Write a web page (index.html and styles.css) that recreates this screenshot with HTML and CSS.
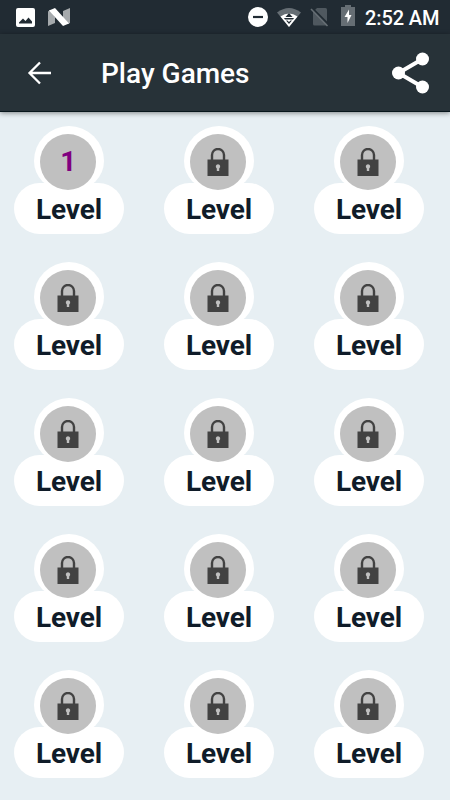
FILE: index.html
```html
<!DOCTYPE html>
<html lang="en">

<head>
    <meta charset="UTF-8">
    <meta name="viewport" content="width=device-width, initial-scale=1.0">
    <title>Play Games</title>
    <link rel="stylesheet" href="styles.css">
</head>

<body>
    <div class="status-bar">
        <div class="status-bar__left">
            <svg width="19" height="19" viewBox="0 0 19 19">
                <path fill="#fff" fill-rule="evenodd" d="M2 0h15a2 2 0 0 1 2 2v15a2 2 0 0 1-2 2H2a2 2 0 0 1-2-2V2a2 2 0 0 1 2-2zM3 15.500h13v-2l-3.500-4-3 3.500-2.500-2.500-4 4z" />
            </svg>
            <svg width="22" height="18" viewBox="0 0 22 18">
                <path fill="#a5a9ac" d="M0 3.500L2 2l5 7v6l-7 3zM22 0v15l-2 1-5-6V3z" />
                <path fill="#fff" d="M1 2.500L7 0l14 15.500L15 18z" />
            </svg>
        </div>
        <div class="status-bar__right">
            <svg class="icon-dnd" width="20" height="20" viewBox="0 0 20 20">
                <circle cx="10" cy="10" r="10" fill="#fff" />
                <path stroke="#212b33" stroke-width="2.200" d="M5 10h10" />
            </svg>
            <svg class="icon-wifi" width="24" height="19" viewBox="0 0 24 19">
                <path fill="#666e74" d="M0 4.500Q12-4.500 24 4.500L12 19z" />
                <path fill="#fff" d="M3.500 8.500Q12 2.500 20.500 8.500L12 19z" />
                <path fill="#212b33" d="M12 5l3.500 4h-7zM7 10h10l-1 1.500h-8zM9 12.500l3 3.500 3-3.500h-1.500l-1.500 1.500-1.500-1.500z" />
            </svg>
            <svg class="icon-sim" width="19" height="20" viewBox="0 0 19 20">
                <path fill="#4f585f" d="M7 1h8.500a1.500 1.500 0 0 1 1.500 1.500V18.500H4.500a1.500 1.500 0 0 1-1.500-1.500V5z" />
                <path stroke="#212b33" stroke-width="2" d="M2 1l17 17" />
                <path stroke="#666e74" stroke-width="1.600" d="M1 2l16.500 17" />
            </svg>
            <svg class="icon-battery" width="14" height="21" viewBox="0 0 14 21">
                <path fill="#666e74" d="M4 0h6v2h4v19H0V2h4z" />
                <path fill="#fff" d="M8 4.500L3.500 12H6.500v6L10.500 10H8z" />
            </svg>
            <span class="clock">2:52 AM</span>
        </div>
    </div>

    <header class="toolbar">
        <svg class="toolbar__back" width="24" height="24" viewBox="0 0 24 24">
            <path fill="none" stroke="#fff" stroke-width="2.300" d="M24 12H3M13 1.500L2.500 12 13 22.500" />
        </svg>
        <h1 class="toolbar__title">Play Games</h1>
        <svg class="toolbar__share" width="38" height="42" viewBox="0 0 38 42">
            <path fill="none" stroke="#fff" stroke-width="4" d="M30.500 7L6.500 21l24 14" />
            <g fill="#fff">
                <circle cx="30.500" cy="7" r="6.500" />
                <circle cx="6.500" cy="21" r="6.500" />
                <circle cx="30.500" cy="35" r="6.500" />
            </g>
        </svg>
    </header>

    <main class="levels" id="levels"></main>

    <script>
        const levelCount = 15;
        const unlocked = 1;

        const lockIcon = `<svg class="lock" width="22" height="28" viewBox="0 0 22 28">
            <path fill="none" stroke="#424242" stroke-width="2.400" d="M5 12V7a6 6 0 0 1 12 0v5" />
            <path fill="#424242" d="M.5 11.500h21V28H.5z" />
            <path fill="#c0c0c0" d="M11 16.200a2.300 2.300 0 0 1 1.200 4.200V23H9.800v-2.600A2.300 2.300 0 0 1 11 16.200z" />
        </svg>`;

        const levels = [];

        for (let i = 1; i <= levelCount; i++) {
            levels.push(`<div class="level">
                <div class="level__badge">
                    <div class="level__inner">${i <= unlocked ? i : lockIcon}</div>
                </div>
                <div class="level__label">Level</div>
            </div>`);
        }

        document.getElementById('levels').innerHTML = levels.join('');
    </script>
</body>

</html>
```
FILE: styles.css
```css
:root {
    --status: #212b33;
    --toolbar: #273238;
    --background: #e7eff3;
    --badge: #c0c0c0;
    --text: #101c29;
    --number: #800080;
}

* {
    box-sizing: border-box;
}

body {
    font-family: Roboto, sans-serif;
    margin: 0;
    height: 800px;
    overflow: hidden;
    background-color: var(--background);
}

.status-bar {
    display: flex;
    justify-content: space-between;
    height: 34px;
    padding: 0 11px 0 16px;
    background-color: var(--status);
}

.status-bar__left,
.status-bar__right {
    display: flex;
    align-items: center;
}

.status-bar__left {
    gap: 13px;
}

.icon-wifi {
    margin-left: 9px;
}

.icon-sim {
    margin-left: 9px;
}

.icon-battery {
    margin: 0 10px 3px 12px;
}

.clock {
    color: #fff;
    font-size: 20px;
    font-weight: 500;
    line-height: 34px;
    width: 74px;
    white-space: nowrap;
    letter-spacing: -0.1px;
    padding-top: 1px;
}

.toolbar {
    display: flex;
    align-items: center;
    height: 78px;
    padding: 1px 20px 0 27px;
    color: #fff;
    background-color: var(--toolbar);
    border-bottom: 1px solid #08171c;
    box-shadow: 0 1px 5px rgba(0, 0, 0, 0.45);
}

.toolbar__title {
    margin: 0 auto 0 50px;
    padding-top: 1px;
    font-size: 28px;
    font-weight: 500;
    line-height: 36px;
}

.levels {
    display: grid;
    grid-template-columns: repeat(3, 110px);
    column-gap: 40px;
    row-gap: 27.8px;
    padding: 14.400px 0 0 14px;
}

.level {
    display: flex;
    flex-direction: column;
    align-items: center;
    height: 108px;
}

.level__badge {
    z-index: 1;
    flex: none;
    width: 70px;
    height: 64px;
    padding: 8px 0 0 6.400px;
    border-radius: 35px 35px 29px 29px;
    background-color: #fff;
}

.level__inner {
    display: flex;
    justify-content: center;
    align-items: center;
    width: 56px;
    height: 56px;
    border-radius: 50%;
    background-color: var(--badge);
    color: var(--number);
    font-size: 28px;
    font-weight: 700;
    line-height: 34px;
}

.level__label {
    width: 110px;
    height: 51px;
    margin-top: -7px;
    border-radius: 26px;
    background-color: #fff;
    color: var(--text);
    font-size: 28px;
    font-weight: 700;
    letter-spacing: -0.1px;
    line-height: 53px;
    text-align: center;
}
```
